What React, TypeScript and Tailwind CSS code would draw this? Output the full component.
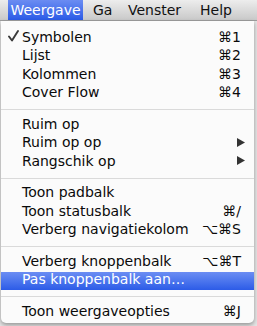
import React from "react";

type Item =
  | { type: "sep" }
  | { type: "item"; label: string; sc?: string; check?: boolean; sub?: boolean; hl?: boolean };

const items: Item[] = [
  { type: "item", label: "Symbolen", sc: "⌘1", check: true },
  { type: "item", label: "Lijst", sc: "⌘2" },
  { type: "item", label: "Kolommen", sc: "⌘3" },
  { type: "item", label: "Cover Flow", sc: "⌘4" },
  { type: "sep" },
  { type: "item", label: "Ruim op" },
  { type: "item", label: "Ruim op op", sub: true },
  { type: "item", label: "Rangschik op", sub: true },
  { type: "sep" },
  { type: "item", label: "Toon padbalk" },
  { type: "item", label: "Toon statusbalk", sc: "⌘/" },
  { type: "item", label: "Verberg navigatiekolom", sc: "⌥⌘S" },
  { type: "sep" },
  { type: "item", label: "Verberg knoppenbalk", sc: "⌥⌘T" },
  { type: "item", label: "Pas knoppenbalk aan…", hl: true },
  { type: "sep" },
  { type: "item", label: "Toon weergaveopties", sc: "⌘J" },
];

export default function App() {
  return (
    <div
      className="w-[257px] h-[326px] bg-[#e4e4e4] overflow-hidden relative"
      style={{ fontFamily: '"DejaVu Sans", sans-serif' }}
    >
      <div className="h-[21px] flex items-stretch bg-gradient-to-b from-[#ededed] to-[#c9c9c9] border-b border-[#9d9d9d] text-[14px] text-[#111]">
        <div className="ml-[8px] w-[75px] pt-[1px] flex items-center justify-center text-white bg-gradient-to-b from-[#6b8cf2] to-[#2b5ae6]">
          Weergave
        </div>
        <div className="ml-[10px] w-[35px] pt-[1px] flex items-center">Ga</div>
        <div className="w-[72px] pt-[1px] flex items-center">Venster</div>
        <div className="pt-[1px] flex items-center">Help</div>
      </div>
      <div className="absolute left-[1px] top-[21px] w-[253px] h-[302px] bg-[#fbfbfb] rounded-b-[5px] shadow-[0_2px_4px_rgba(0,0,0,0.35)] pt-[8px] text-[14px] text-[#0a0a0a]">
        {items.map((it, i) =>
          it.type === "sep" ? (
            <div key={i} className="h-[13px] flex items-center">
              <div className="h-px w-full bg-[#dadada]" />
            </div>
          ) : (
            <div
              key={i}
              className={
                "h-[18.5px] leading-[18px] pb-[3px] flex items-center pl-[21px] relative " +
                (it.sub ? "pr-[9px] " : "pr-[13px] ") +
                (it.hl ? "text-white bg-gradient-to-b from-[#6b8df3] to-[#2c5be7]" : "")
              }
            >
              {it.check && (
                <svg
                  width="11"
                  height="12"
                  viewBox="0 0 11 12"
                  className="absolute left-[7px] top-[1px]"
                >
                  <path
                    d="M1 6.5 L4 10.5 L10 1"
                    fill="none"
                    stroke="#3a3a3a"
                    strokeWidth="1.9"
                    strokeLinecap="round"
                    strokeLinejoin="round"
                  />
                </svg>
              )}
              <span className="flex-1 whitespace-nowrap">{it.label}</span>
              {it.sc && <span className="whitespace-nowrap">{it.sc}</span>}
              {it.sub && (
                <svg width="8" height="9" viewBox="0 0 8 9">
                  <path d="M0 0 L8 4.5 L0 9 Z" fill="#333" />
                </svg>
              )}
            </div>
          )
        )}
      </div>
    </div>
  );
}
